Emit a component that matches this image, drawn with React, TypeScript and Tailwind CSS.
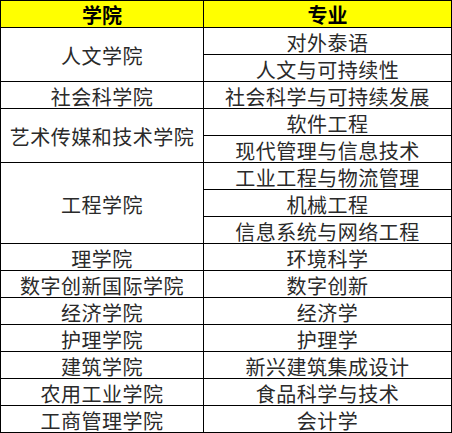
const FONT = { fontFamily: '"Noto Sans CJK SC", "Noto Sans", sans-serif' };

// left column: name + how many major rows it spans
const COLLEGES: { name: string; span: string }[] = [
  { name: '人文学院', span: 'row-span-2' },
  { name: '社会科学院', span: 'row-span-1' },
  { name: '艺术传媒和技术学院', span: 'row-span-2' },
  { name: '工程学院', span: 'row-span-3' },
  { name: '理学院', span: 'row-span-1' },
  { name: '数字创新国际学院', span: 'row-span-1' },
  { name: '经济学院', span: 'row-span-1' },
  { name: '护理学院', span: 'row-span-1' },
  { name: '建筑学院', span: 'row-span-1' },
  { name: '农用工业学院', span: 'row-span-1' },
  { name: '工商管理学院', span: 'row-span-1' },
];

const MAJORS = [
  '对外泰语',
  '人文与可持续性',
  '社会科学与可持续发展',
  '软件工程',
  '现代管理与信息技术',
  '工业工程与物流管理',
  '机械工程',
  '信息系统与网络工程',
  '环境科学',
  '数字创新',
  '经济学',
  '护理学',
  '新兴建筑集成设计',
  '食品科学与技术',
  '会计学',
];

const cell = 'bg-white flex items-center justify-center text-[20px] leading-none tracking-[0.5px] text-[#2a2a2a] whitespace-nowrap';

export default function App() {
  return (
    <div className="w-[452px] h-[433px] bg-white" style={FONT}>
      <div className="grid grid-cols-[202px_247px] grid-rows-[repeat(16,26px)] grid-flow-col gap-px bg-black p-px w-[452px]">
        {/* Header */}
        <div className="bg-[#ffff00] flex items-center justify-center text-[20px] leading-none font-bold text-black">
          <span className="pt-[2px]">学院</span>
        </div>
        {COLLEGES.map((c) => (
          <div key={c.name} className={`${cell} ${c.span}`}>
            <span className="pt-[3px]">{c.name}</span>
          </div>
        ))}
        <div className="bg-[#ffff00] flex items-center justify-center text-[20px] leading-none font-bold text-black">
          <span className="pt-[2px]">专业</span>
        </div>
        {MAJORS.map((m) => (
          <div key={m} className={cell}>
            <span className="pt-[3px]">{m}</span>
          </div>
        ))}
      </div>
    </div>
  );
}
